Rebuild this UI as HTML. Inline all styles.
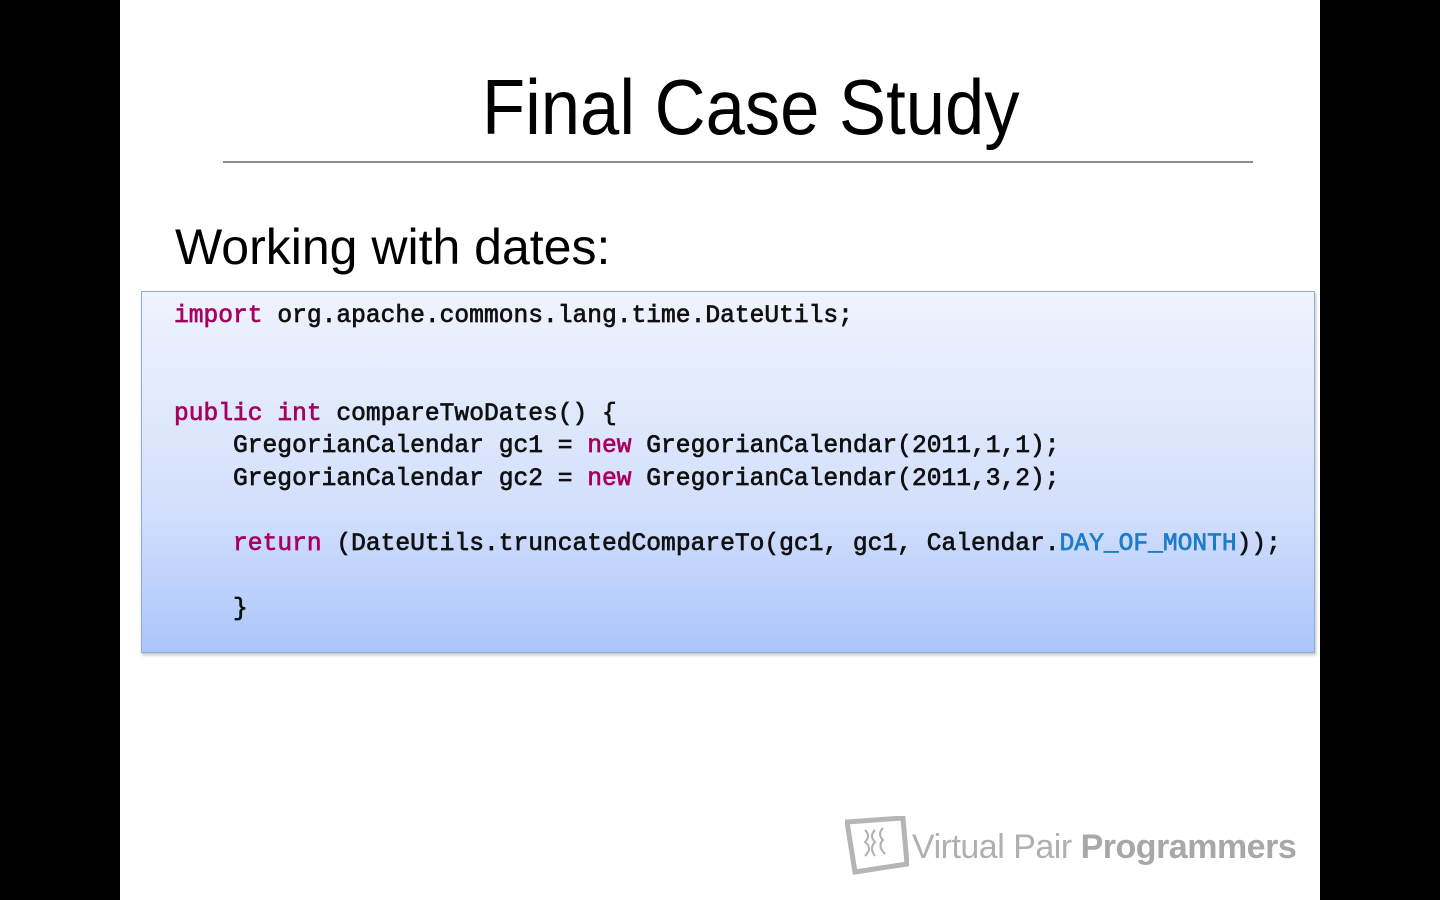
<!DOCTYPE html>
<html><head><style>
body{margin:0;width:1440px;height:900px;background:#000;position:relative;overflow:hidden;font-family:"Liberation Sans",sans-serif}
#slide{position:absolute;left:120px;top:0;width:1200px;height:900px;background:#fff}
.t{position:absolute;white-space:nowrap;transform-origin:left top}
#box{position:absolute;left:141px;top:291px;width:1172px;height:360px;border:1px solid #93acd6;background:linear-gradient(#eff3fd,#d3e0fc 60%,#abc5fb);box-shadow:1px 2px 3px rgba(0,0,0,.25)}
pre{position:absolute;left:174px;top:301px;margin:0;font-family:"Liberation Mono",monospace;font-size:24.6px;line-height:32.6px;color:#111;-webkit-text-stroke:0.7px #111}
.k{color:#a8005f;-webkit-text-stroke:0.7px #a8005f}
.c{color:#1d7cc9;-webkit-text-stroke:0.7px #1d7cc9}
</style></head><body>
<div id="slide"></div>
<div class="t" style="left:482px;top:62px;font-size:78px;color:#000;transform:scaleX(0.905)">Final Case Study</div>
<div style="position:absolute;left:223px;top:161px;width:1030px;height:2px;background:#8c8c8c"></div>
<div class="t" style="left:175px;top:218px;font-size:50px;color:#000;transform:scaleX(1.0)">Working with dates:</div>
<div id="box"></div>
<pre><span class="k">import</span> org.apache.commons.lang.time.DateUtils;


<span class="k">public</span> <span class="k">int</span> compareTwoDates() {
    GregorianCalendar gc1 = <span class="k">new</span> GregorianCalendar(2011,1,1);
    GregorianCalendar gc2 = <span class="k">new</span> GregorianCalendar(2011,3,2);

    <span class="k">return</span> (DateUtils.truncatedCompareTo(gc1, gc1, Calendar.<span class="c">DAY_OF_MONTH</span>));

    }</pre>
<svg style="position:absolute;left:845px;top:816px" width="64" height="60" viewBox="0 0 64 60">
<polygon points="2,6 58,2 62,48 10,56" fill="none" stroke="#b5b5b5" stroke-width="5"/>
<path d="M20,14 q6,6 0,12 q8,6 0,14 M30,14 q-6,6 0,12 q-6,6 0,14 M38,12 q-6,6 0,12 q-6,6 2,14" fill="none" stroke="#b0b0b0" stroke-width="2"/>
</svg>
<div class="t" style="left:912px;top:828px;font-size:34px;color:#b0b0b0;letter-spacing:-0.5px">Virtual Pair <b style="color:#a8a8a8">Programmers</b></div>
</body></html>
